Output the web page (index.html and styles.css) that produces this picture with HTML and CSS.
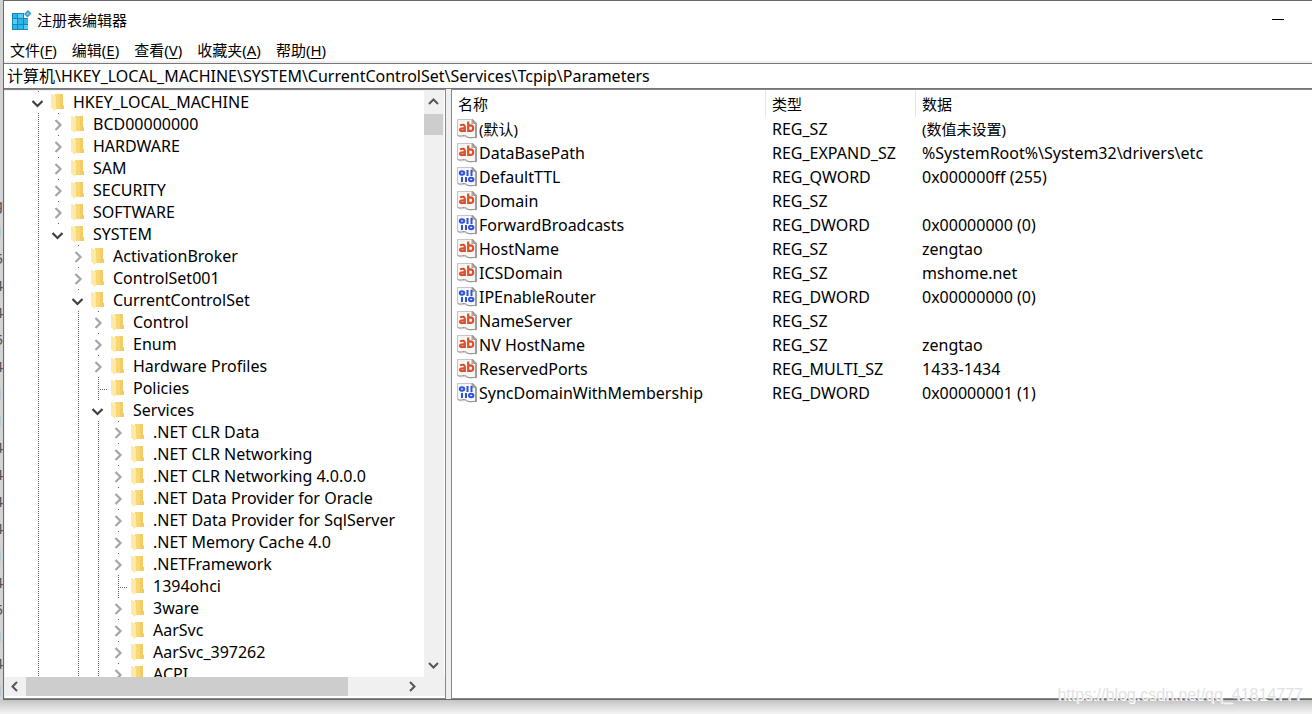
FILE: index.html
```html
<!DOCTYPE html>
<html lang="zh-CN">
<head>
<meta charset="utf-8">
<title>注册表编辑器</title>
<link rel="stylesheet" href="styles.css">
</head>
<body>
<svg class="sprite" aria-hidden="true">
  <symbol id="i-folder" viewBox="0 0 14 18"><path d="M4 1h8v11l1 0v4H4z" fill="#f8d775"/><path d="M9 1h3v11h1v4H9z" fill="#f3cc66"/><path d="M0 1h1l4 2v13l-2 2-1-2-2-1z" fill="#ffe9a6"/></symbol>
  <symbol id="i-right" viewBox="0 0 20 22"><path d="M7.500 7l5 5-5 5" fill="none" stroke="#a6a6a6" stroke-width="2.200"/></symbol>
  <symbol id="i-down" viewBox="0 0 20 22"><path d="M4.500 10l5 5 5-5" fill="none" stroke="#404040" stroke-width="2.200"/></symbol>
  <symbol id="i-page" viewBox="0 0 20 20"><path d="M.5.500h14.500l4 4v14.500c-2-2-4 1-6.500 0-2-1-3-3-5-2-2 1.500-4 1-7-.5z" fill="#f7f7f7" stroke="#c4c4c4"/><path d="M15 .5l4 4v14.500" fill="none" stroke="#888" stroke-width="1.500"/><path d="M14.500.500v4.500h4.500z" fill="#aaa"/><path d="M1 16.500c3 1.500 4-.5 6 0s3 2.500 6 2h5" fill="none" stroke="#999"/></symbol>
  <symbol id="i-ab" viewBox="0 0 20 20"><use href="#i-page"/><g fill="none" stroke="#db4f2c" stroke-width="2.200"><path d="M3 6.300q4.500-1.500 4.800 1.200V13M7.800 9.300q-5-.3-4.900 1.500.5 2.400 4.900.2M11.200 2.500V13M11.200 7.500q1.500-1.500 3.500-.9 1.500.6 1.500 2.700 0 2.700-2.500 2.700-1.500 0-2.500-.8"/></g></symbol>
  <symbol id="i-bin" viewBox="0 0 20 20"><use href="#i-page"/><g fill="none" stroke="#2f50dc" stroke-width="2"><ellipse cx="5" cy="6" rx="2.200" ry="1.800"/><path d="M10.500 3v6M14.500 3v6M5 10v5M9 10v5"/><ellipse cx="14.200" cy="12.500" rx="2.200" ry="1.800"/></g></symbol>
</svg>
<div class="behind" aria-hidden="true"><span>g</span><span>1</span><span>5</span><span>4</span><span>4</span><span>5</span><span>4</span><span>1</span><span>1</span><span>4</span><span>4</span><span>4</span><span>4</span><span>1</span><span>4</span><span>5</span><span>1</span><span>4</span><span>1</span></div>
<main class="window">
  <header class="titlebar">
    <svg class="app-icon" viewBox="0 0 20 20"><path d="M0 3h12v5h4v12H0z" fill="#1687b8"/><path d="M1 4h4v4H1zM6 4h5v4H6zM1 9h4v5H1zM6 9h5v5H6zM12 9h4v5h-4zM1 15h4v4H1zM6 15h5v4H6zM12 15h4v4h-4z" fill="#2cb5ed"/><path d="M1 9h4v5H1zM6 4h5v4H6zM12 15h4v4h-4z" fill="#58ccf5"/><path d="M12 4l4-4 3.500 3.500-4 4z" fill="#3c9ac4"/><path d="M14 4l2-2 1.500 1.500-2 2z" fill="#72c7e8"/></svg>
    <h1>注册表编辑器</h1>
    <button class="minimize" aria-label="最小化"></button>
  </header>
  <nav class="menu">
    <button>文件(<u>F</u>)</button><button>编辑(<u>E</u>)</button><button>查看(<u>V</u>)</button><button>收藏夹(<u>A</u>)</button><button>帮助(<u>H</u>)</button>
  </nav>
  <input class="address" type="text" aria-label="地址" value="计算机\HKEY_LOCAL_MACHINE\SYSTEM\CurrentControlSet\Services\Tcpip\Parameters">
  <div class="panes">
    <section class="tree-pane">
      <div class="tree-view">
        <ul class="tree">
          <li><div class="row"><button class="toggle" aria-label="折叠"><svg><use href="#i-down"/></svg></button><svg class="folder"><use href="#i-folder"/></svg>HKEY_LOCAL_MACHINE</div>
            <ul class="guided">
              <li><div class="row"><button class="toggle" aria-label="展开"><svg><use href="#i-right"/></svg></button><svg class="folder"><use href="#i-folder"/></svg>BCD00000000</div></li>
              <li><div class="row"><button class="toggle" aria-label="展开"><svg><use href="#i-right"/></svg></button><svg class="folder"><use href="#i-folder"/></svg>HARDWARE</div></li>
              <li><div class="row"><button class="toggle" aria-label="展开"><svg><use href="#i-right"/></svg></button><svg class="folder"><use href="#i-folder"/></svg>SAM</div></li>
              <li><div class="row"><button class="toggle" aria-label="展开"><svg><use href="#i-right"/></svg></button><svg class="folder"><use href="#i-folder"/></svg>SECURITY</div></li>
              <li><div class="row"><button class="toggle" aria-label="展开"><svg><use href="#i-right"/></svg></button><svg class="folder"><use href="#i-folder"/></svg>SOFTWARE</div></li>
              <li><div class="row"><button class="toggle" aria-label="折叠"><svg><use href="#i-down"/></svg></button><svg class="folder"><use href="#i-folder"/></svg>SYSTEM</div>
                <ul>
                  <li><div class="row"><button class="toggle" aria-label="展开"><svg><use href="#i-right"/></svg></button><svg class="folder"><use href="#i-folder"/></svg>ActivationBroker</div></li>
                  <li><div class="row"><button class="toggle" aria-label="展开"><svg><use href="#i-right"/></svg></button><svg class="folder"><use href="#i-folder"/></svg>ControlSet001</div></li>
                  <li><div class="row"><button class="toggle" aria-label="折叠"><svg><use href="#i-down"/></svg></button><svg class="folder"><use href="#i-folder"/></svg>CurrentControlSet</div>
                    <ul class="guided">
                      <li><div class="row"><button class="toggle" aria-label="展开"><svg><use href="#i-right"/></svg></button><svg class="folder"><use href="#i-folder"/></svg>Control</div></li>
                      <li><div class="row"><button class="toggle" aria-label="展开"><svg><use href="#i-right"/></svg></button><svg class="folder"><use href="#i-folder"/></svg>Enum</div></li>
                      <li><div class="row"><button class="toggle" aria-label="展开"><svg><use href="#i-right"/></svg></button><svg class="folder"><use href="#i-folder"/></svg>Hardware Profiles</div></li>
                      <li><div class="row"><span class="leaf"></span><svg class="folder"><use href="#i-folder"/></svg>Policies</div></li>
                      <li><div class="row"><button class="toggle" aria-label="折叠"><svg><use href="#i-down"/></svg></button><svg class="folder"><use href="#i-folder"/></svg>Services</div>
                        <ul class="guided">
                          <li><div class="row"><button class="toggle" aria-label="展开"><svg><use href="#i-right"/></svg></button><svg class="folder"><use href="#i-folder"/></svg>.NET CLR Data</div></li>
                          <li><div class="row"><button class="toggle" aria-label="展开"><svg><use href="#i-right"/></svg></button><svg class="folder"><use href="#i-folder"/></svg>.NET CLR Networking</div></li>
                          <li><div class="row"><button class="toggle" aria-label="展开"><svg><use href="#i-right"/></svg></button><svg class="folder"><use href="#i-folder"/></svg>.NET CLR Networking 4.0.0.0</div></li>
                          <li><div class="row"><button class="toggle" aria-label="展开"><svg><use href="#i-right"/></svg></button><svg class="folder"><use href="#i-folder"/></svg>.NET Data Provider for Oracle</div></li>
                          <li><div class="row"><button class="toggle" aria-label="展开"><svg><use href="#i-right"/></svg></button><svg class="folder"><use href="#i-folder"/></svg>.NET Data Provider for SqlServer</div></li>
                          <li><div class="row"><button class="toggle" aria-label="展开"><svg><use href="#i-right"/></svg></button><svg class="folder"><use href="#i-folder"/></svg>.NET Memory Cache 4.0</div></li>
                          <li><div class="row"><button class="toggle" aria-label="展开"><svg><use href="#i-right"/></svg></button><svg class="folder"><use href="#i-folder"/></svg>.NETFramework</div></li>
                          <li><div class="row"><span class="leaf"></span><svg class="folder"><use href="#i-folder"/></svg>1394ohci</div></li>
                          <li><div class="row"><button class="toggle" aria-label="展开"><svg><use href="#i-right"/></svg></button><svg class="folder"><use href="#i-folder"/></svg>3ware</div></li>
                          <li><div class="row"><button class="toggle" aria-label="展开"><svg><use href="#i-right"/></svg></button><svg class="folder"><use href="#i-folder"/></svg>AarSvc</div></li>
                          <li><div class="row"><button class="toggle" aria-label="展开"><svg><use href="#i-right"/></svg></button><svg class="folder"><use href="#i-folder"/></svg>AarSvc_397262</div></li>
                          <li><div class="row"><button class="toggle" aria-label="展开"><svg><use href="#i-right"/></svg></button><svg class="folder"><use href="#i-folder"/></svg>ACPI</div></li>
                        </ul></li>
                    </ul></li>
                </ul></li>
            </ul></li>
        </ul>
      </div>
      <div class="vscroll">
        <button aria-label="向上滚动"><svg viewBox="0 0 20 20"><path d="M5 13l4.500-4.500L14 13" /></svg></button>
        <div class="thumb"></div>
        <button class="end" aria-label="向下滚动"><svg viewBox="0 0 20 20"><path d="M5 6l4.500 4.500L14 6" /></svg></button>
      </div>
      <div class="hscroll">
        <button aria-label="向左滚动"><svg viewBox="0 0 20 20"><path d="M12 5L7.500 9.500 12 14" /></svg></button>
        <div class="thumb"></div>
        <button class="end" aria-label="向右滚动"><svg viewBox="0 0 20 20"><path d="M8 5l4.500 4.500L8 14" /></svg></button>
      </div>
    </section>
    <section class="values-pane">
      <table>
        <colgroup><col class="c-name"><col class="c-type"><col></colgroup>
        <thead><tr><th>名称</th><th>类型</th><th>数据</th></tr></thead>
        <tbody>
          <tr><td class="zh"><svg><use href="#i-ab"/></svg>(默认)</td><td>REG_SZ</td><td class="zh">(数值未设置)</td></tr>
          <tr><td><svg><use href="#i-ab"/></svg>DataBasePath</td><td>REG_EXPAND_SZ</td><td>%SystemRoot%\System32\drivers\etc</td></tr>
          <tr><td><svg><use href="#i-bin"/></svg>DefaultTTL</td><td>REG_QWORD</td><td>0x000000ff (255)</td></tr>
          <tr><td><svg><use href="#i-ab"/></svg>Domain</td><td>REG_SZ</td><td></td></tr>
          <tr><td><svg><use href="#i-bin"/></svg>ForwardBroadcasts</td><td>REG_DWORD</td><td>0x00000000 (0)</td></tr>
          <tr><td><svg><use href="#i-ab"/></svg>HostName</td><td>REG_SZ</td><td>zengtao</td></tr>
          <tr><td><svg><use href="#i-ab"/></svg>ICSDomain</td><td>REG_SZ</td><td>mshome.net</td></tr>
          <tr><td><svg><use href="#i-bin"/></svg>IPEnableRouter</td><td>REG_DWORD</td><td>0x00000000 (0)</td></tr>
          <tr><td><svg><use href="#i-ab"/></svg>NameServer</td><td>REG_SZ</td><td></td></tr>
          <tr><td><svg><use href="#i-ab"/></svg>NV HostName</td><td>REG_SZ</td><td>zengtao</td></tr>
          <tr><td><svg><use href="#i-ab"/></svg>ReservedPorts</td><td>REG_MULTI_SZ</td><td>1433-1434</td></tr>
          <tr><td><svg><use href="#i-bin"/></svg>SyncDomainWithMembership</td><td>REG_DWORD</td><td>0x00000001 (1)</td></tr>
        </tbody>
      </table>
    </section>
  </div>
</main>
<div class="watermark">https://blog.csdn.net/qq_41814777</div>
</body>
</html>
```
FILE: styles.css
```css
* { box-sizing: border-box; }
body {
  margin: 0;
  height: 100vh;
  display: flex;
  overflow: hidden;
  position: relative;
  padding-bottom: 14px;
  background: linear-gradient(to top, #f4f4f4, #c4c4c4 14px);
  color: #000;
  font: 15px/22px "Noto Sans", "Noto Sans CJK SC", sans-serif;
}
.sprite { position: absolute; width: 0; height: 0; }
svg { display: block; flex: none; }
button { border: 0; padding: 0; background: none; font: inherit; color: inherit; }
ul { list-style: none; margin: 0; padding: 0; }

.behind {
  flex: none;
  width: 3px;
  padding-top: 191px;
  display: flex;
  flex-direction: column;
  align-items: flex-end;
  overflow: hidden;
  background: #d2d2d2;
  color: #555;
  line-height: 27px;
}

.window {
  flex: 1;
  min-width: 0;
  display: flex;
  flex-direction: column;
  background: #fff;
  border: 1px solid #696969;
  border-right: 0;
}
.titlebar { display: flex; align-items: center; height: 37px; padding: 0 28px 0 8px; }
.app-icon { width: 20px; height: 20px; }
.titlebar h1 { flex: 1; margin: 0 0 0 5px; font-size: 15px; font-weight: 400; }
.minimize { width: 12px; height: 20px; background: linear-gradient(#000, #000) 0 9px / 12px 1px no-repeat; }
.menu { display: flex; gap: 15px; height: 25px; padding: 0 6px; border-bottom: 2px solid #f0f0f0; }
.menu u { text-underline-offset: 2px; }
.address {
  height: 26px;
  padding: 0 3px 2px;
  border: 0;
  border-top: 1px solid #777;
  border-bottom: 1px solid #777;
  background: #fff;
  color: #000;
  font: inherit;
  font-size: 16px;
  outline: 0;
}

.panes { flex: 1; min-height: 0; display: flex; gap: 5px; background: #f0f0f0; font-size: 16px; }
.tree-pane {
  flex: none;
  width: 442px;
  display: grid;
  grid-template: minmax(0, 1fr) 21px / minmax(0, 1fr) 21px;
  padding: 1px 0 0 1px;
  background: #f0f0f0;
  border: solid #828790;
  border-width: 1px 1px 1px 0;
}
.tree-view { overflow: hidden; background: #fff; padding-left: 23px; }
.tree ul { padding-left: 20px; }
.guided { background: repeating-linear-gradient(#666 0 1px, transparent 1px 2px) 10px 0 / 1px 100% no-repeat; }
.row { display: flex; align-items: center; height: 22px; white-space: nowrap; }
.toggle, .leaf { width: 20px; height: 22px; flex: none; }
.toggle { background: linear-gradient(#666, #666) 10px 0 / 1px 1px no-repeat; }
.leaf {
  background:
    repeating-linear-gradient(#666 0 1px, transparent 1px 2px) 10px 0 / 1px 22px no-repeat,
    repeating-linear-gradient(90deg, #666 0 1px, transparent 1px 2px) 10px 12px / 10px 1px no-repeat;
}
.toggle svg { width: 20px; height: 22px; }
.folder { width: 14px; height: 18px; margin: 0 8px 0 3px; }

.vscroll { display: flex; flex-direction: column; border-right: 1px solid #fff; }
.hscroll { display: flex; grid-column: 1 / 3; border-bottom: 2px solid #fff; }
.vscroll button, .hscroll button { flex: none; width: 20px; height: 20px; }
.vscroll path, .hscroll path { fill: none; stroke: #555; stroke-width: 2; }
.vscroll svg, .hscroll svg { width: 20px; height: 20px; }
.vscroll .thumb { height: 21px; margin-top: 3px; background: #cdcdcd; width: 19px; }
.hscroll .thumb { width: 322px; margin-left: 1px; background: #cdcdcd; }
.vscroll .end { margin-top: auto; }
.hscroll .end { margin-left: auto; margin-right: 23px; }

.values-pane { flex: 1; min-width: 0; background: #fff; border: solid #828790; border-width: 1px 0 1px 1px; }
table { width: 100%; table-layout: fixed; border-collapse: separate; border-spacing: 0; }
.c-name { width: 314px; }
.c-type { width: 150px; }
th { height: 27px; padding: 0 6px; font-size: 15px; font-weight: 400; text-align: left; border-right: 1px solid #e5e5e5; }
th:last-child { border-right: 0; }
td { height: 24px; padding: 0 6px; line-height: 24px; white-space: nowrap; }
td:first-child { display: flex; align-items: center; gap: 2px; padding-left: 5px; }
td svg { width: 20px; height: 20px; }
.zh { font-size: 15px; }

.watermark {
  position: absolute;
  right: 9px;
  bottom: 8px;
  color: #e2e2e2;
  text-shadow: 1px 1px 0 #fff;
  font: 16px/22px "Liberation Sans", Arial, sans-serif;
}
```
